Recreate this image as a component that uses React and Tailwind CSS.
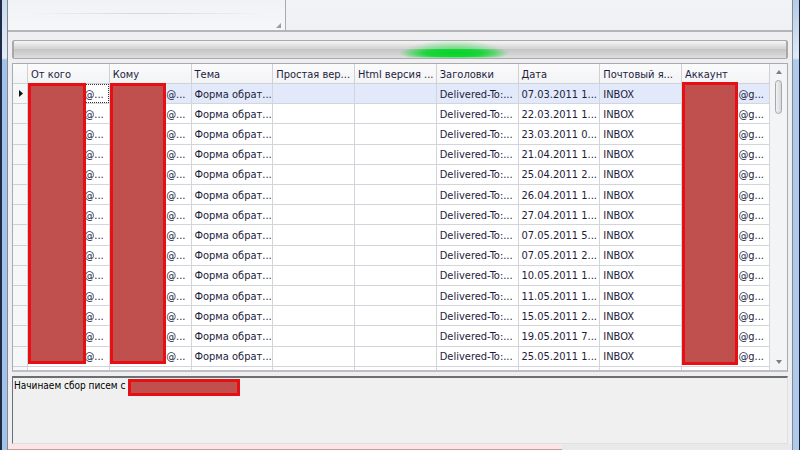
const columns = [
  'От кого',
  'Кому',
  'Тема',
  'Простая вер...',
  'Html версия ...',
  'Заголовки',
  'Дата',
  'Почтовый я...',
  'Аккаунт',
];

const dates = [
  '07.03.2011 1...',
  '22.03.2011 1...',
  '23.03.2011 0...',
  '21.04.2011 1...',
  '25.04.2011 2...',
  '26.04.2011 1...',
  '27.04.2011 1...',
  '07.05.2011 5...',
  '07.05.2011 2...',
  '10.05.2011 1...',
  '11.05.2011 1...',
  '15.05.2011 2...',
  '19.05.2011 7...',
  '25.05.2011 1...',
];

const cell = 'overflow-hidden whitespace-nowrap border-b border-r border-[#d3d5da] p-0 pt-[2px] pl-[3px]';
const maskCell = 'relative whitespace-nowrap border-b border-r border-[#d3d5da] p-0 pt-[2px] pr-[5px] text-right';

function Mask({ size }) {
  return <span className={`absolute z-10 border-[3px] border-[#e60f14] bg-[#c0504d] ${size}`} />;
}

function Ribbon() {
  return (
    <div className="flex h-8 shrink-0 border-b-2 border-[#b3b5ba] bg-linear-to-b from-[#f2f3f6] to-[#f0f1f4]">
      <div className="flex w-[278px] flex-col justify-between border-r border-[#a9abb0] bg-linear-to-b from-[#f1f2f5] to-[#f6f7f9] pt-[13px] pr-1 pb-[2px]">
        <div className="mr-4 ml-5 h-px bg-linear-to-r from-transparent via-[#d3d5d9] to-transparent" />
        <svg className="self-end" width="5" height="5" viewBox="0 0 5 5" aria-hidden="true">
          <path d="M5 0V5H0Z" fill="#9a9ca0" />
        </svg>
      </div>
    </div>
  );
}

function ProgressBar() {
  return (
    <div
      role="progressbar"
      aria-label="Сбор писем"
      className="relative h-[19px] shrink-0 overflow-hidden rounded-[2px] border border-[#a9a9a9] bg-linear-to-b from-[#f3f3f3] from-5% via-[#d6d6d6] via-40% to-[#d9d9d9] shadow-[inset_1px_0_0_#a8a8a8,inset_-1px_0_0_#a8a8a8]"
    >
      <div className="absolute inset-x-px top-2 bottom-0 bg-linear-to-b from-[#c4c4c4] to-[#dedede]" />
      <div className="absolute inset-0 bg-[radial-gradient(52px_14px_at_57%_75%,#10d632a0_0%,#2fdc4c70_50%,transparent_100%)]" />
      <div className="absolute inset-x-0 top-[8px] h-[8px] bg-[radial-gradient(56px_8px_at_57%_50%,#06d429_0%,#0cd52ee0_50%,transparent_100%)]" />
    </div>
  );
}

function MailGrid() {
  return (
    <div className="flex h-[309px] shrink-0 overflow-hidden border border-b-2 border-[#a9abb0] border-b-[#bcbec4] bg-white">
      <div className="min-w-0 flex-1 overflow-hidden">
        <table className="h-[303px] w-full table-fixed border-separate border-spacing-0 text-[#1e1d3c]">
          <colgroup>
            <col className="w-[15px]" />
            <col />
            <col />
            <col />
            <col />
            <col />
            <col />
            <col />
            <col />
            <col className="w-[88px]" />
          </colgroup>
          <thead>
            <tr className="h-5 bg-linear-to-b from-[#fbfbfc] to-[#f2f3f5]">
              <th className="border-r border-b border-[#cfd1d6] p-0" aria-label="Строка" />
              {columns.map((name) => (
                <th key={name} scope="col" className="overflow-hidden border-r border-b border-[#cfd1d6] p-0 pt-[2px] pl-[3px] text-left font-normal whitespace-nowrap">
                  {name}
                </th>
              ))}
            </tr>
          </thead>
          <tbody>
            {dates.map((date, i) => (
              <tr key={date} className={i === 0 ? 'bg-[#e2e9fb]' : 'bg-white'}>
                <td className="border-r border-b border-[#cfd1d6] bg-[#f6f7f9] p-0">
                  {i === 0 && (
                    <svg className="ml-[6px]" width="4" height="7" viewBox="0 0 4 7" aria-label="Текущая строка">
                      <path d="M0 0L4 3.5L0 7Z" fill="#111" />
                    </svg>
                  )}
                </td>
                <td className={i === 0 ? `${maskCell} bg-white` : maskCell}>
                  @...
                  {i === 0 && <span className="absolute inset-0 border border-dotted border-[#333]" />}
                  {i === 0 && <Mask size="-top-px left-0 h-[281px] w-[58px]" />}
                </td>
                <td className={maskCell}>
                  @...
                  {i === 0 && <Mask size="-top-px left-0 h-[281px] w-[56px]" />}
                </td>
                <td className={cell}>Форма обрат...</td>
                <td className={cell} />
                <td className={cell} />
                <td className={cell}>Delivered-To:...</td>
                <td className={cell}>{date}</td>
                <td className={cell}>INBOX</td>
                <td className={maskCell}>
                  @g...
                  {i === 0 && <Mask size="-top-[2px] left-0 h-[283px] w-[56px]" />}
                </td>
              </tr>
            ))}
          </tbody>
        </table>
        <div className="flex h-1">
          <div className="w-[15px] border-r border-[#d3d5da] bg-[#f6f7f9]" />
          {columns.map((name, i) => (
            <div key={name} className={i === 8 ? 'w-[88px] border-r border-[#d3d5da]' : 'flex-1 border-r border-[#d3d5da]'} />
          ))}
        </div>
      </div>
      <div className="flex w-[17px] flex-col items-center bg-[#f3f4f6] py-[6px]">
        <button type="button" aria-label="Вверх" className="flex h-[10px] items-start">
          <svg width="6" height="4" viewBox="0 0 6 4">
            <path d="M0 4L3 0L6 4Z" fill="#7c7e83" />
          </svg>
        </button>
        <div className="h-[34px] w-[7px] rounded-full border border-[#a5a7ab] bg-linear-to-r from-[#f1f1f2] to-[#d6d7da]" />
        <button type="button" aria-label="Вниз" className="mt-auto flex h-[10px] items-end">
          <svg width="6" height="4" viewBox="0 0 6 4">
            <path d="M0 0L3 4L6 0Z" fill="#7c7e83" />
          </svg>
        </button>
      </div>
    </div>
  );
}

function Log() {
  return (
    <div className="relative flex h-[68px] shrink-0">
      <textarea
        readOnly
        aria-label="Журнал"
        defaultValue="Начинаем сбор писем с"
        className="w-full resize-none border border-t-2 border-[#dfe0e2] border-t-[#6d6e71] border-l-[#6d6e71] bg-[#f0f0f0] px-px text-[10px] leading-[16px] text-black outline-none"
      />
      <Mask size="top-[3px] left-[116px] h-[17px] w-[112px]" />
    </div>
  );
}

export default function App() {
  return (
    <div className="flex h-screen overflow-hidden font-['DejaVu_Sans_Condensed','Noto_Sans',sans-serif] text-[11px] leading-[16px]">
      <div className="w-[7px] shrink-0 border-l-2 border-[#1d2b45] bg-[linear-gradient(to_bottom,#c9dbf0_0px,#e3ecf7_58px,#a3c2e8_60px,#a3c2e8_100%)]" />
      <main className="flex min-w-0 flex-1 flex-col border-x border-[#85888d] bg-[#efeff1]">
        <Ribbon />
        <div className="flex flex-col gap-1 px-1 pt-2">
          <ProgressBar />
          <MailGrid />
          <Log />
        </div>
        <div className="mt-auto h-[7px] shrink-0 bg-[#e9e9eb] pr-[230px]">
          <div className="h-full border-b-2 border-[#c79a9c] bg-[#fae6e6]" />
        </div>
      </main>
      <div className="w-[7px] shrink-0 border-r border-[#16202f] bg-[linear-gradient(to_bottom,#b5cbe8_0px,#dfeaf7_58px,#aecbee_60px,#aecbee_100%)]" />
    </div>
  );
}
